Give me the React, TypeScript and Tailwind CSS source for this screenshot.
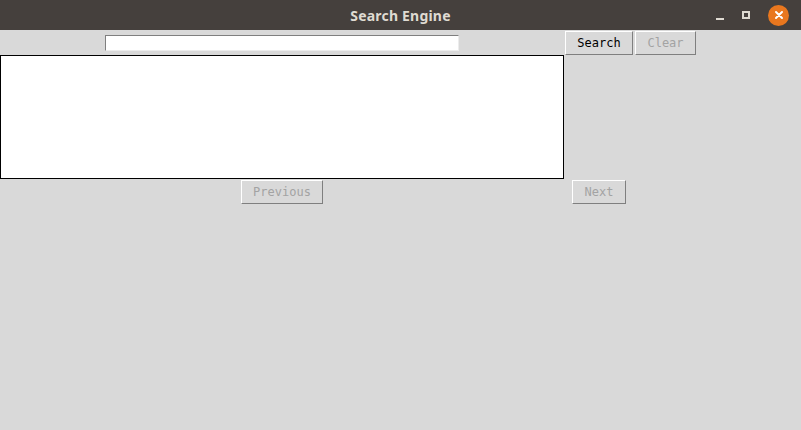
export default function App() {
  const btn =
    'h-[24px] border border-t-white border-l-white border-b-[#7f7f7f] border-r-[#7f7f7f] bg-[#d9d9d9] text-[12px] leading-none flex items-center justify-center';

  return (
    <div className="w-[801px] h-[430px] bg-[#d9d9d9] overflow-hidden" style={{ fontFamily: '"DejaVu Sans Mono", monospace' }}>
      {/* title bar */}
      <div className="h-[30px] bg-[#45403d] relative flex items-center justify-center">
        <span className="text-[14px] font-bold text-[#dfdbd2] tracking-[0.2px]" style={{ fontFamily: '"Noto Sans", "DejaVu Sans", sans-serif' }}>
          Search Engine
        </span>
        <div className="absolute right-[12px] top-0 h-[30px] flex items-center gap-[18px]">
          <div className="w-[8px] h-[2px] bg-[#dfdbd2] mt-[8px]" />
          <div className="w-[8px] h-[8px] border-2 border-[#dfdbd2]" />
          <div className="w-[21px] h-[21px] rounded-full bg-[#e9771e] flex items-center justify-center">
            <svg width="10" height="10" viewBox="0 0 10 10">
              <path d="M2 2 L8 8 M8 2 L2 8" stroke="#fff" strokeWidth="2" strokeLinecap="round" />
            </svg>
          </div>
        </div>
      </div>

      <div className="grid grid-cols-[564px_70px_67px] pt-[1px]">
        {/* row 1 */}
        <div className="flex items-center justify-center h-[24px]">
          <div className="w-[354px] h-[16px] bg-white border border-t-[#7f7f7f] border-l-[#7f7f7f] border-b-[#ececec] border-r-[#ececec]" />
        </div>
        <div className={btn + ' w-[68px] ml-[1px] text-black'}>Search</div>
        <div className={btn + ' w-[61px] ml-[1px] text-[#a3a3a3]'}>Clear</div>

        {/* row 2 */}
        <div className="h-[124px] w-[564px] bg-white border border-black" />
        <div />
        <div />

        {/* row 3 */}
        <div className="flex justify-center pt-[1px]">
          <div className={btn + ' w-[82px] text-[#a3a3a3]'}>Previous</div>
        </div>
        <div className="flex justify-center pt-[1px]">
          <div className={btn + ' w-[54px] text-[#a3a3a3]'}>Next</div>
        </div>
        <div />
      </div>
    </div>
  );
}
